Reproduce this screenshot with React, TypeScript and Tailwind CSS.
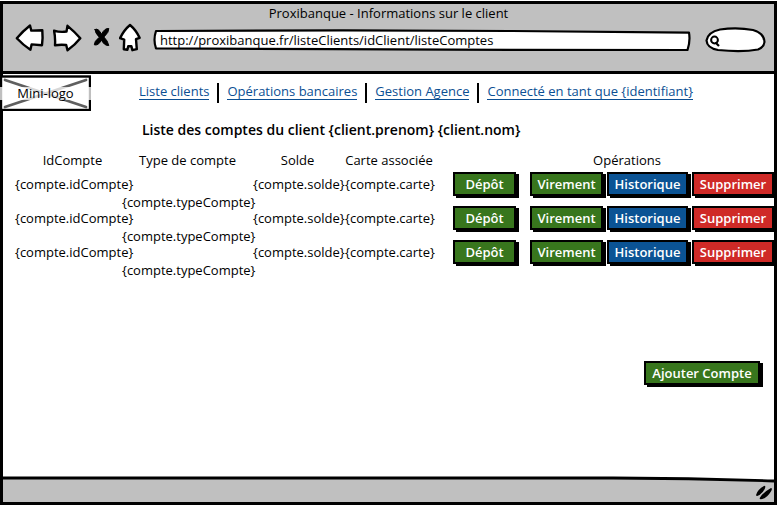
import type { ReactNode } from "react";

const tones = {
  green: "bg-[#38761d]",
  blue: "bg-[#0b5394]",
  red: "bg-[#cf2a27]",
};

function ActionButton({ tone, width, children }: { tone: keyof typeof tones; width: string; children: ReactNode }) {
  return (
    <button
      type="button"
      className={`h-6 shrink-0 whitespace-nowrap border-2 border-black text-[13px] leading-5 font-semibold text-white shadow-[3px_2px_0_#000] ${tones[tone]} ${width}`}
    >
      {children}
    </button>
  );
}

function ToolButton({ label, box, width, path, solid }: { label: string; box: string; width: string; path: string; solid?: boolean }) {
  return (
    <button type="button" aria-label={label} className={`h-8 shrink-0 ${width}`}>
      <svg viewBox={box} className="h-8 w-full" fill={solid ? "#000" : "#fff"} stroke="#000" strokeWidth={solid ? 1 : 2.4} strokeLinejoin="round" strokeLinecap="round">
        <path d={path} />
      </svg>
    </button>
  );
}

const links = ["Liste clients", "Opérations bancaires", "Gestion Agence", "Connecté en tant que {identifiant}"];
const rows = [1, 2, 3];

export default function App() {
  return (
    <div className="flex min-h-screen flex-col bg-white pt-px pr-px pb-px font-['Open_Sans','Noto_Sans',sans-serif] text-[13px] text-black">
      <div className="flex flex-1 flex-col border-[3px] border-black">
        <header className="border-b-[3px] border-black bg-[#c0c0c0] pb-4">
          <div className="pb-px text-center leading-[18px]">Proxibanque - Informations sur le client</div>
          <div className="flex items-center gap-2 pr-2 pl-3">
            <ToolButton label="Précédent" width="w-[30px]" box="15 22 30 32" path="M16.8 37.3Q23 30 30 24.5L31.3 29.6L42.3 29.2Q43 37 42 44.2L31.6 43.4L30.4 48.7Q23 44 16.8 37.3Z" />
            <ToolButton label="Suivant" width="w-[30px]" box="53 22 30 32" path="M54 29.6Q60 31.5 66.5 30.5L67.5 24.8Q75 31 80.3 37.3Q75 44 67.5 49.3L66.2 44Q60 43.5 55 44.3Q55.5 36 54 29.6Z" />
            <ToolButton label="Arrêter" width="w-5" box="91 22 20 32" solid path="M95 28.5Q98 26.500 101.600 33.200Q104.500 27 108.800 27.500Q109.300 31 103.900 36Q108 40 108.800 44.500Q104.500 45 101.600 39.200Q98 45 94.300 43.800Q94 40.500 99.300 36.200Q95 32 95 28.500Z" />
            <ToolButton label="Accueil" width="w-[26px]" box="119 22 26 32" path="M130 24Q136 29 139.6 36.8L136 38.2L136.8 48.2L132.4 49.2L131.4 45.2L128.2 45.2L127.4 48.8L123.8 48.2L124.2 38.6L120 37.2Q124 29 130 24Z" />
            <div className="flex min-w-0 flex-1 items-center gap-3">
              <div className="relative h-6 min-w-0 flex-1">
                <svg viewBox="0 0 540 24" preserveAspectRatio="none" className="absolute inset-0 h-full w-full" fill="#fff" stroke="#000" strokeWidth="2.2" strokeLinejoin="round">
                  <path d="M3 4L190 3.4L360 4L537 5.6Q538.500 14 535.500 23L360 22.800L180 22.200L3 21.400Q0 13 3 4Z" />
                </svg>
                <input aria-label="Adresse" defaultValue="http://proxibanque.fr/listeClients/idClient/listeComptes" className="relative block h-[26px] w-full bg-transparent pl-[7px] outline-none" />
              </div>
              <div className="relative h-7 w-[62px] shrink-0 pt-px">
                <svg viewBox="704 26 62 28" className="absolute inset-0 h-full w-full" fill="#fff" stroke="#000" strokeWidth="2.2">
                  <path d="M720 30.500Q737 28 753 31Q764 34 764.500 43Q764 48 758 50.500Q742 53.500 718 51Q707 49 706.500 41.500Q708 33 720 30.500Z" />
                  <circle cx="714.500" cy="41" r="3.400" strokeWidth="2" />
                  <path d="M715.500 43.500L719 47" />
                </svg>
                <input aria-label="Rechercher" className="relative block h-6 w-full bg-transparent pr-2 pl-5 outline-none" />
              </div>
            </div>
          </div>
        </header>

        <div className="flex items-start">
          <div className="relative -ml-[3px] mt-px flex h-9 w-[91px] shrink-0 items-center justify-center">
            <svg viewBox="0 0 91 36" className="absolute inset-0 h-full w-full" fill="#fff">
              <rect x="1" y="1.500" width="89" height="33.500" stroke="#000" strokeWidth="2.400" />
              <path d="M5 5L86 32M86 5L5 32" stroke="#5f5f5f" strokeWidth="2.800" strokeLinecap="round" />
            </svg>
            <span className="relative w-full bg-white/75 text-center leading-[13px]">Mini-logo</span>
          </div>
          <nav className="flex pt-2 pl-12">
            {links.map((link, i) => (
              <div key={link} className="flex items-start">
                {i > 0 && <span className="mx-2 mt-px h-5 w-0.5 bg-black" />}
                <a href="#" className="mt-px whitespace-nowrap border-b border-[#0b4f93] leading-4 text-[#0b4f93]">{link}</a>
              </div>
            ))}
          </nav>
        </div>

        <main className="flex-1">
          <h1 className="mt-[9px] pl-[139px] text-sm leading-5 font-semibold">Liste des comptes du client {"{client.prenom} {client.nom}"}</h1>
          <table className="mt-3 w-full table-fixed border-collapse">
            <colgroup>
              <col className="w-[119px]" />
              <col className="w-[131px]" />
              <col className="w-[89px]" />
              <col className="w-[94px]" />
              <col className="w-[94px]" />
              <col />
            </colgroup>
            <thead>
              <tr className="h-6 align-top leading-4 whitespace-nowrap">
                <th className="pl-5 font-normal">IdCompte</th>
                <th className="font-normal">Type de compte</th>
                <th className="font-normal">Solde</th>
                <th className="font-normal">Carte associée</th>
                <th colSpan={2} className="pl-11 font-normal">Opérations</th>
              </tr>
            </thead>
            <tbody>
              {rows.map((row) => (
                <tr key={row} className="h-[34px] align-top leading-4 whitespace-nowrap">
                  <td className="pl-3">{"{compte.idCompte}"}</td>
                  <td className="pt-[18px] text-center">{"{compte.typeCompte}"}</td>
                  <td className="text-center">{"{compte.solde}"}</td>
                  <td className="pl-0.5 text-center">{"{compte.carte}"}</td>
                  <td>
                    <div className="-mt-1 flex pl-[17px]">
                      <ActionButton tone="green" width="w-[63px]">Dépôt</ActionButton>
                    </div>
                  </td>
                  <td>
                    <div className="-mt-1 flex gap-1">
                      <ActionButton tone="green" width="w-[73px]">Virement</ActionButton>
                      <ActionButton tone="blue" width="w-[81px]">Historique</ActionButton>
                      <ActionButton tone="red" width="w-[82px]">Supprimer</ActionButton>
                    </div>
                  </td>
                </tr>
              ))}
            </tbody>
          </table>
          <div className="mt-[83px] flex justify-end pr-[14px]">
            <ActionButton tone="green" width="w-[116px]">Ajouter Compte</ActionButton>
          </div>
        </main>

        <footer className="relative flex h-[26px] items-end justify-end bg-[#c0c0c0]">
          <svg viewBox="0 0 771 8" preserveAspectRatio="none" className="absolute inset-x-0 top-0 h-2 w-full" fill="#fff">
            <path d="M0 0H771V4.500Q690 2 610 1.500H0Z" />
            <path d="M0 2H610Q690 2 771 5" fill="none" stroke="#000" strokeWidth="2.800" />
          </svg>
          <svg viewBox="0 0 18 16" className="mr-px mb-px h-4 w-[18px]" fill="#000" stroke="#000" strokeWidth="1.800" strokeLinejoin="round">
            <path d="M2 10Q3.500 5 9.500 1.800Q9.500 3.500 7 6.500Q4.500 9.500 2 10ZM5.500 13.300Q8 8.500 16 4Q15.500 6.500 11.500 10.500Q8 13.500 5.500 13.300Z" />
          </svg>
        </footer>
      </div>
    </div>
  );
}
